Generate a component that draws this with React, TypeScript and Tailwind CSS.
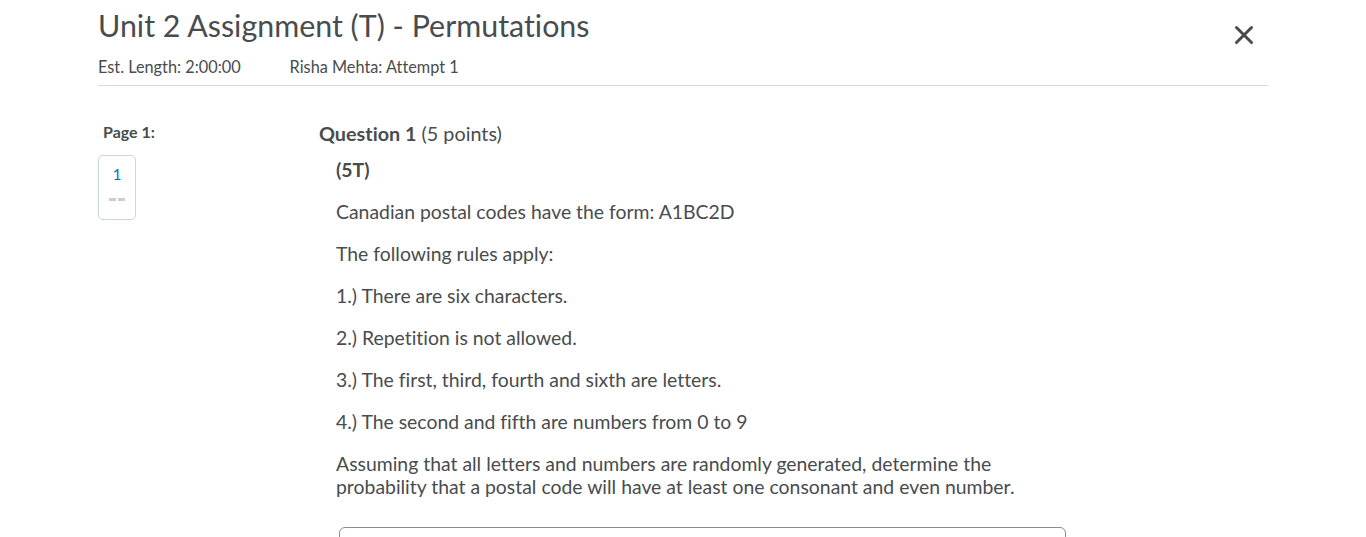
import { X } from 'lucide-react'

// Quiz page — header, page nav, question body.

const RULES = [
  '1.) There are six characters.',
  '2.) Repetition is not allowed.',
  '3.) The first, third, fourth and sixth are letters.',
  '4.) The second and fifth are numbers from 0 to 9',
]

export default function App() {
  return (
    <div className="h-[537px] overflow-hidden bg-white text-[#494c4e] font-['Lato','Noto_Sans',sans-serif] [font-variant-ligatures:none]">
      <div className="mx-[98px]">
        {/* header */}
        <div className="flex items-start justify-between">
          <h1 className="text-[30.4px] leading-[50px] font-normal text-[#494c4e]">
            Unit 2 Assignment (T) - Permutations
          </h1>
          <button aria-label="Close" className="mt-[20px] mr-[9px] text-[#494c4e]">
            <X size={30} strokeWidth={2.4} />
          </button>
        </div>
        <div className="flex items-center gap-[49px] text-[16.3px] leading-[24px] pt-[5px] pb-[6px] border-b border-[#d3d9e3]">
          <span>Est. Length: 2:00:00</span>
          <span>Risha Mehta: Attempt 1</span>
        </div>

        {/* body */}
        <div className="flex pt-[35px]">
          <div className="w-[221px] shrink-0">
            <div className="pl-[5px] text-[16px] font-bold leading-[22px]">Page 1:</div>
            <div className="mt-[12px] w-[38px] h-[65px] rounded-[5px] border border-[#cdd5dc] flex flex-col items-center pt-[7px]">
              <span className="text-[15px] leading-[22px] text-[#006fbf]">1</span>
              <div className="mt-[13px] flex gap-[2px]">
                <span className="block w-[7px] h-[3px] bg-[#c9ced2]" />
                <span className="block w-[7px] h-[3px] bg-[#c9ced2]" />
              </div>
            </div>
          </div>

          <div className="flex-1">
            <div className="text-[19.8px] leading-[26px] -mt-[1px] text-[#494c4e]">
              <span className="font-bold">Question 1</span> (5 points)
            </div>
            <div className="pl-[17px] pt-[12px] text-[19.4px] leading-[23px] w-[748px]">
              <p className="font-bold">(5T)</p>
              <p className="mt-[19px]">Canadian postal codes have the form: A1BC2D</p>
              <p className="mt-[19px]">The following rules apply:</p>
              {RULES.map((r) => (
                <p key={r} className="mt-[19px]">{r}</p>
              ))}
              <p className="mt-[19px]">
                Assuming that all letters and numbers are randomly generated, determine the
                probability that a postal code will have at least one consonant and even number.
              </p>
              <div className="mt-[29px] ml-[3px] w-[727px] h-[40px] rounded-[6px] border border-[#868c90]" />
            </div>
          </div>
        </div>
      </div>
    </div>
  )
}
